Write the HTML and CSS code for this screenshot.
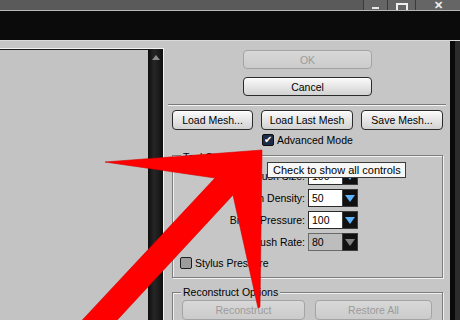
FILE: index.html
```html
<!DOCTYPE html>
<html lang="en">
<head>
    <meta charset="UTF-8">
    <title>Liquify</title>
    <link rel="stylesheet" href="styles.css">
</head>
<body>
    <div class="window">
        <div class="titlebar">
            <div class="win-buttons">
                <span class="win-btn min"><span class="glyph-min"></span></span>
                <span class="win-btn restore"><span class="glyph-restore"></span></span>
                <span class="win-btn close">✕</span>
            </div>
        </div>
        <div class="menubar"></div>

        <div class="dialog">
            <div class="preview">
                <div class="canvas"></div>
                <div class="scrollbar"><span class="scroll-up"></span></div>
            </div>

            <div class="panel">
                <div class="actions">
                    <button class="btn wide disabled">OK</button>
                    <button class="btn wide">Cancel</button>
                </div>
                <div class="separator"></div>

                <div class="mesh-row">
                    <button class="btn mesh-load">Load Mesh...</button>
                    <button class="btn mesh-last">Load Last Mesh</button>
                    <button class="btn mesh-save">Save Mesh...</button>
                </div>

                <div class="check advanced">
                    <span class="box checked">✔</span>
                    <span>Advanced Mode</span>
                </div>

                <!-- Tool Options -->
                <div class="group tool-options">
                    <span class="group-title">Tool Options</span>
                    <div class="field-row">
                        <span class="field-label">Brush Size:</span>
                        <span class="field">100</span>
                        <span class="drop"></span>
                    </div>
                    <div class="field-row">
                        <span class="field-label">Brush Density:</span>
                        <span class="field">50</span>
                        <span class="drop"></span>
                    </div>
                    <div class="field-row">
                        <span class="field-label">Brush Pressure:</span>
                        <span class="field">100</span>
                        <span class="drop"></span>
                    </div>
                    <div class="field-row off">
                        <span class="field-label">Brush Rate:</span>
                        <span class="field">80</span>
                        <span class="drop"></span>
                    </div>
                    <div class="check stylus">
                        <span class="box"></span>
                        <span>Stylus Pressure</span>
                    </div>
                </div>

                <!-- Reconstruct Options -->
                <div class="group reconstruct">
                    <span class="group-title">Reconstruct Options</span>
                    <div class="reconstruct-row">
                        <button class="btn disabled rec-btn">Reconstruct</button>
                        <button class="btn disabled restore-btn">Restore All</button>
                    </div>
                </div>
            </div>

            <div class="edge"></div>
        </div>

        <div class="tooltip">Check to show all controls</div>

        <svg class="arrow" width="460" height="320" viewBox="0 0 460 320">
            <polygon points="73,330 215,178 105,162 262,150 260,307 258,308 233,195 108,330" fill="#ff0000" stroke="#d40000" stroke-width="0.6"/>
        </svg>
    </div>
</body>
</html>
```

FILE: styles.css
```css
body, html {
    margin: 0;
    padding: 0;
    width: 460px;
    height: 320px;
    overflow: hidden;
    background-color: #c5c5c5;
    font-family: 'Liberation Sans', Arial, sans-serif;
    font-size: 10px;
    color: #000;
}
.window {
    position: relative;
    width: 460px;
    height: 320px;
    display: flex;
    flex-direction: column;
}
.titlebar {
    height: 10px;
    background-color: #5a5a5a;
    border-bottom: 1px solid #b8b8b8;
    display: flex;
    justify-content: flex-end;
    flex-shrink: 0;
}
.win-buttons {
    display: flex;
    height: 10px;
}
.win-btn {
    height: 10px;
    border-left: 1px solid #3a3a3a;
    background-color: #656565;
    color: #eee;
    display: flex;
    justify-content: center;
    align-items: flex-end;
    overflow: hidden;
    box-sizing: border-box;
}
.win-btn.min {
    width: 24px;
}
.win-btn.restore {
    width: 28px;
}
.win-btn.close {
    width: 45px;
    font-size: 11px;
    line-height: 9px;
    font-weight: bold;
}
.glyph-min {
    width: 7px;
    height: 2px;
    background-color: #e8e8e8;
    margin-bottom: 1px;
}
.glyph-restore {
    width: 8px;
    height: 5px;
    border: 2px solid #eee;
    border-bottom: none;
}
.menubar {
    height: 29px;
    background-color: #0b0b0b;
    border-bottom: 1px solid #dadada;
    flex-shrink: 0;
}
.dialog {
    flex-grow: 1;
    display: flex;
    background-color: #c6c6c6;
}
.preview {
    margin-top: 7px;
    width: 164px;
    display: flex;
    border-top: 1px solid #f2f2f2;
    border-right: 1px solid #f2f2f2;
    box-sizing: border-box;
    flex-shrink: 0;
}
.canvas {
    flex-grow: 1;
    background-color: #c3c3c3;
    border-top: 1px solid #1a1a1a;
}
.scrollbar {
    width: 15px;
    background: linear-gradient(to right, #0d0d0d, #262626 40%, #1c1c1c 70%, #0d0d0d);
    display: flex;
    justify-content: center;
    padding-top: 6px;
    box-sizing: border-box;
}
.scroll-up {
    width: 0;
    height: 0;
    border-left: 4px solid transparent;
    border-right: 4px solid transparent;
    border-bottom: 5px solid #8c8c8c;
}
.panel {
    flex-grow: 1;
    padding: 9px 7px 0 8px;
    display: flex;
    flex-direction: column;
}
.actions {
    display: flex;
    flex-direction: column;
    align-items: center;
    gap: 8px;
}
.btn {
    font-family: 'Liberation Sans', Arial, sans-serif;
    font-size: 10.5px;
    color: #000;
    height: 20px;
    padding: 0;
    border: 1px solid #2b2b2b;
    border-radius: 4px;
    background: linear-gradient(#fbfbfb, #e6e6e6 50%, #d2d2d2);
    box-shadow: inset 0 1px 0 #fff;
    box-sizing: border-box;
}
.btn.wide {
    width: 129px;
    height: 19px;
}
.btn.disabled {
    color: #9b9b9b;
    border-color: #a4a4a4;
    background: linear-gradient(#d8d8d8, #cbcbcb);
    box-shadow: none;
}
.separator {
    margin: 8px -3px 0 -4px;
    height: 1px;
    border-top: 1px solid #7a7a7a;
    background-color: #f4f4f4;
}
.mesh-row {
    margin-top: 4px;
    display: flex;
    gap: 8px;
}
.mesh-load {
    width: 81px;
}
.mesh-last {
    width: 92px;
}
.mesh-save {
    width: 82px;
}
.check {
    display: flex;
    align-items: center;
    gap: 3px;
    font-size: 10.5px;
    height: 13px;
}
.check.advanced {
    margin-top: 3px;
    margin-left: 90px;
}
.box {
    width: 12px;
    height: 12px;
    box-sizing: border-box;
    border: 1px solid #1f1f1f;
    border-radius: 2px;
    background-color: #9c9c9c;
    display: flex;
    justify-content: center;
    align-items: center;
    font-size: 10px;
    line-height: 10px;
    color: #fff;
}
.box.checked {
    background-color: #1c2b47;
    border-color: #0d0d0d;
}
.group {
    border: 1px solid #7d7d7d;
    box-shadow: 1px 1px 0 #f0f0f0, inset 1px 1px 0 #f0f0f0;
    display: flex;
    flex-direction: column;
}
.group-title {
    align-self: flex-start;
    margin: -7px 0 0 8px;
    padding: 0 2px;
    background-color: #c6c6c6;
    font-size: 10.5px;
    line-height: 12px;
}
.tool-options {
    margin-top: 9px;
    height: 123px;
    box-sizing: border-box;
    padding-top: 2px;
    gap: 4px;
}
.field-row {
    display: flex;
    align-items: center;
    height: 18px;
    flex-shrink: 0;
}
.field-label {
    width: 132px;
    text-align: right;
    margin-right: 3px;
    font-size: 10.5px;
}
.field {
    width: 34px;
    height: 18px;
    box-sizing: border-box;
    background-color: #fff;
    border: 1px solid #2a2a2a;
    border-right: none;
    padding: 2px 0 0 3px;
    font-size: 10.5px;
}
.drop {
    width: 16px;
    height: 18px;
    box-sizing: border-box;
    background-color: #111;
    border: 1px solid #3c3c3c;
    display: flex;
    justify-content: center;
    align-items: center;
}
.drop::after {
    content: '';
    border-left: 5px solid transparent;
    border-right: 5px solid transparent;
    border-top: 7px solid #5fb4ff;
}
.field-row.off .field {
    background-color: #bdbdbd;
    border-color: #6a6a6a;
}
.field-row.off .drop::after {
    border-top-color: #808080;
}
.check.stylus {
    margin: 1px 0 0 7px;
}
.reconstruct {
    margin-top: 14px;
    flex-grow: 1;
    border-bottom: none;
}
.reconstruct-row {
    display: flex;
    gap: 10px;
    margin: 2px 0 0 9px;
}
.rec-btn {
    width: 123px;
}
.restore-btn {
    width: 117px;
}
.edge {
    width: 10px;
    flex-shrink: 0;
    background: linear-gradient(to right, #0a0a0a 5px, #2c2c2c 5px);
}
.tooltip {
    position: absolute;
    left: 267px;
    top: 162px;
    width: 139px;
    height: 16px;
    box-sizing: border-box;
    background-color: #f7f7f7;
    border: 1px solid #3b3b3b;
    padding: 1px 0 0 5px;
    font-size: 11px;
    line-height: 13px;
    white-space: nowrap;
}
.arrow {
    position: absolute;
    left: 0;
    top: 0;
}
```
